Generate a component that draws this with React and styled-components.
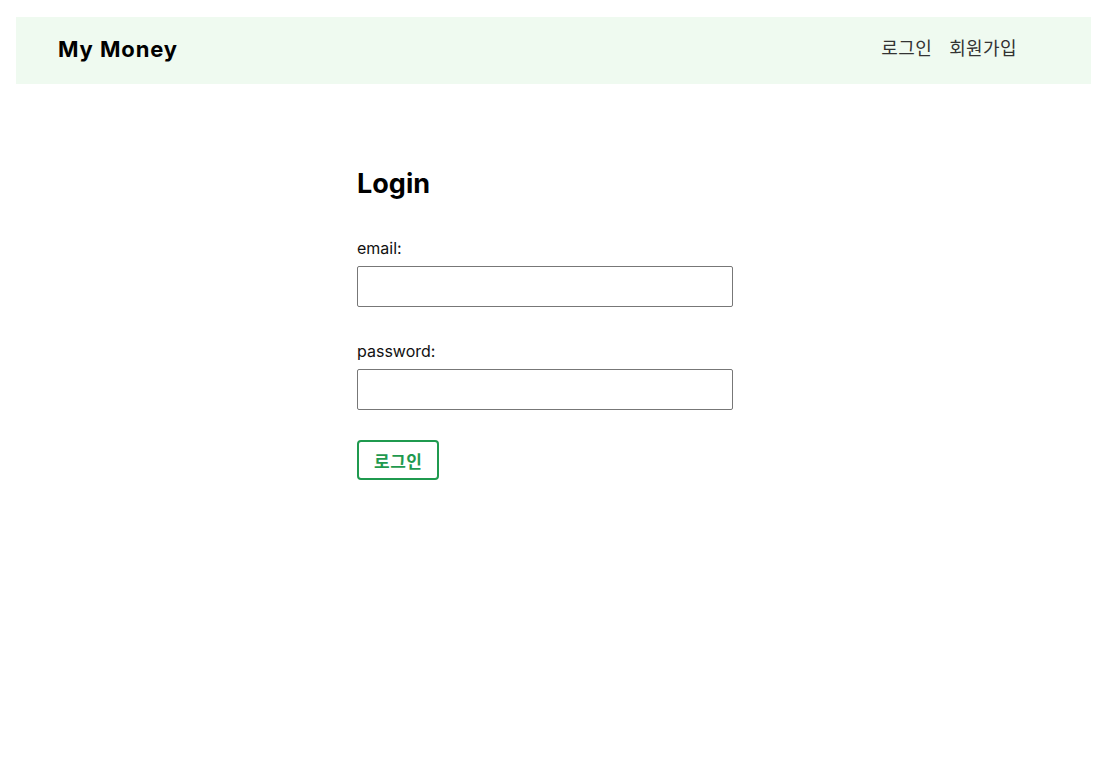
import React from "react";
import styled, { createGlobalStyle } from "styled-components";

const GlobalStyle = createGlobalStyle`
  body {
    margin: 0;
    background: #fff;
    font-family: "Inter", "Noto Sans CJK KR", sans-serif;
  }
`;

const Page = styled.div`
  padding: 17px 11px 0 16px;
`;

const Nav = styled.nav`
  height: 67px;
  background-color: #effaf0;
  display: flex;
  align-items: center;
  justify-content: space-between;
  padding: 0 74px 0 42px;
`;

const Logo = styled.h1`
  margin: 0;
  padding-bottom: 4px;
  font-size: 22px;
  font-weight: 700;
  letter-spacing: 0.9px;
  color: #000;
`;

const NavItems = styled.ul`
  display: flex;
  gap: 17px;
  margin: 0;
  padding: 0 0 7px;
  list-style: none;
`;

const NavLink = styled.a`
  font-family: "Noto Sans CJK KR", sans-serif;
  font-size: 18px;
  letter-spacing: 0.4px;
  color: #333;
  text-decoration: none;
  cursor: pointer;
`;

const Form = styled.form`
  width: 376px;
  margin: 83px 0 0 341px;
`;

const Title = styled.h2`
  margin: 0 0 36px;
  font-size: 27px;
  font-weight: 700;
  color: #000;
`;

const Field = styled.label`
  display: flex;
  flex-direction: column;
  margin-bottom: 32px;
`;

const LabelText = styled.span`
  font-size: 16px;
  line-height: 24px;
  color: #111;
  margin-bottom: 6px;
`;

const Input = styled.input`
  box-sizing: border-box;
  width: 100%;
  height: 41px;
  border: 1px solid #777;
  border-radius: 2px;
  padding: 0 8px;
  font-size: 15px;
`;

const Button = styled.button`
  margin-top: -2px;
  height: 40px;
  padding: 0 15px;
  background: #fff;
  border: 2px solid #1f9a4f;
  border-radius: 4px;
  color: #1f9a4f;
  font-family: "Noto Sans CJK KR", sans-serif;
  font-size: 17px;
  font-weight: 700;
  letter-spacing: 0.5px;
  cursor: pointer;
`;

export default function App() {
  return (
    <Page>
      <GlobalStyle />
      <Nav>
        <Logo>My Money</Logo>
        <NavItems>
          <li><NavLink href="#login">로그인</NavLink></li>
          <li><NavLink href="#signup">회원가입</NavLink></li>
        </NavItems>
      </Nav>
      <Form onSubmit={(e) => e.preventDefault()}>
        <Title>Login</Title>
        <Field>
          <LabelText>email:</LabelText>
          <Input type="email" />
        </Field>
        <Field>
          <LabelText>password:</LabelText>
          <Input type="password" />
        </Field>
        <Button type="submit">로그인</Button>
      </Form>
    </Page>
  );
}
